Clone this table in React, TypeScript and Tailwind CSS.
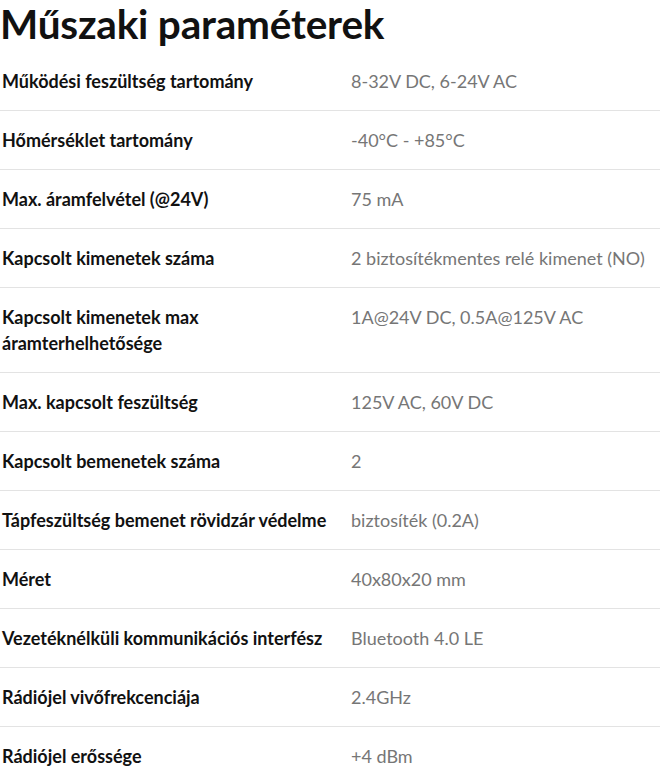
const rows: [string, string][] = [
  ["Működési feszültség tartomány", "8-32V DC, 6-24V AC"],
  ["Hőmérséklet tartomány", "-40°C - +85°C"],
  ["Max. áramfelvétel (@24V)", "75 mA"],
  ["Kapcsolt kimenetek száma", "2 biztosítékmentes relé kimenet (NO)"],
  ["Kapcsolt kimenetek max áramterhelhetősége", "1A@24V DC, 0.5A@125V AC"],
  ["Max. kapcsolt feszültség", "125V AC, 60V DC"],
  ["Kapcsolt bemenetek száma", "2"],
  ["Tápfeszültség bemenet rövidzár védelme", "biztosíték (0.2A)"],
  ["Méret", "40x80x20 mm"],
  ["Vezetéknélküli kommunikációs interfész", "Bluetooth 4.0 LE"],
  ["Rádiójel vivőfrekcenciája", "2.4GHz"],
  ["Rádiójel erőssége", "+4 dBm"],
];

export default function App() {
  return (
    <div className="bg-white w-[660px] font-['Lato',sans-serif] text-[#111]">
      {/* Title */}
      <h2 className="text-[40.5px] font-bold leading-[48px] mb-1 tracking-[-0.2px]">
        Műszaki paraméterek
      </h2>

      {/* Spec table */}
      <div>
        {rows.map(([label, value]) => (
          <div
            key={label}
            className="grid grid-cols-[351px_1fr] border-b border-[#e3e3e3] py-4 text-[18px] leading-[26px]"
          >
            <div className="font-bold pl-0.5 pr-6">{label}</div>
            <div className="text-[#767676]">{value}</div>
          </div>
        ))}
      </div>
    </div>
  );
}
